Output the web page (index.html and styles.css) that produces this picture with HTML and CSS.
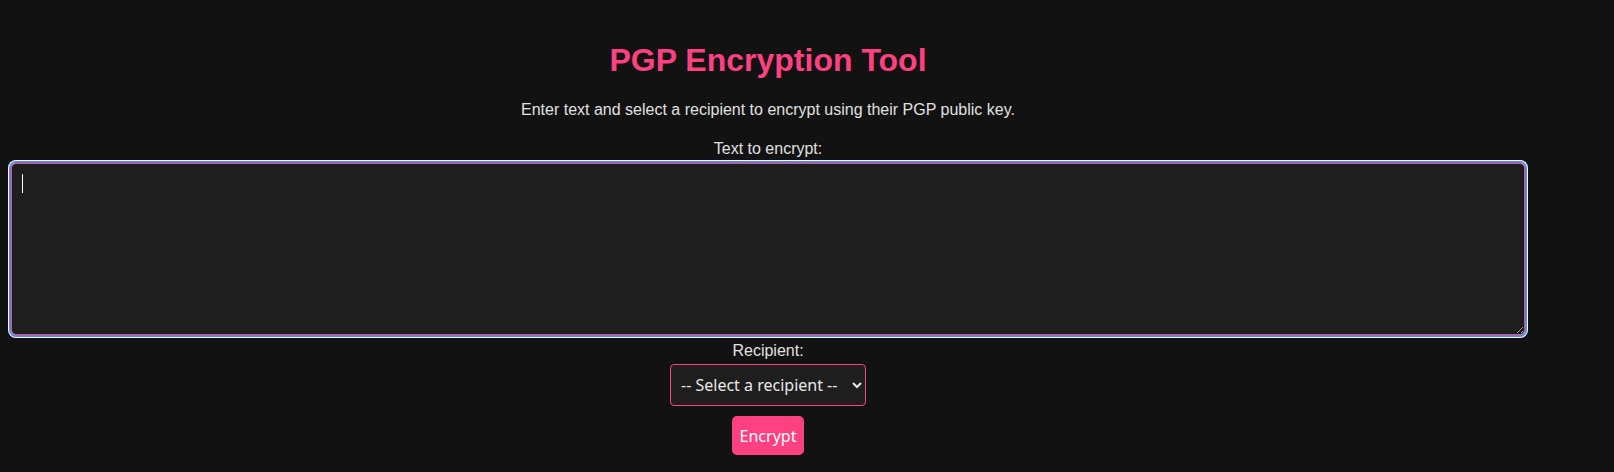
FILE: index.html
```html
<!DOCTYPE html>
<html lang="en">
<head>
<meta charset="utf-8">
<title>PGP Encryption Tool</title>
<link rel="stylesheet" href="styles.css">
</head>
<body>
<main class="page">
  <h1 class="title">PGP Encryption Tool</h1>
  <p class="intro">Enter text and select a recipient to encrypt using their PGP public key.</p>
  <label class="field-label" for="plain">Text to encrypt:</label>
  <div class="plain-wrap">
    <textarea id="plain" class="plain"></textarea>
    <span class="caret"></span>
  </div>
  <label class="field-label field-label--recipient" for="recipient">Recipient:</label>
  <select id="recipient" class="recipient">
    <option>-- Select a recipient --</option>
  </select>
  <button class="encrypt" type="button">Encrypt</button>
</main>
</body>
</html>
```
FILE: styles.css
```css
html, body {
  margin: 0;
  background: #121212;
}
body {
  color: #e0e0e0;
  font-family: "Liberation Sans", Arial, sans-serif;
  font-size: 16px;
}
.page {
  width: 1536px;
  padding-top: 42px;
  display: flex;
  flex-direction: column;
  align-items: center;
  text-align: center;
}
.title {
  margin: 0 0 22px;
  font-size: 32px;
  line-height: 37px;
  font-weight: bold;
  color: #ff4081;
}
.intro {
  margin: 0 0 21px;
  line-height: 18px;
}
.field-label {
  display: block;
  line-height: 18px;
  margin-bottom: 5px;
}
.field-label--recipient {
  margin-top: 7px;
  margin-bottom: 4px;
}
.plain-wrap {
  position: relative;
  display: flex;
}
.plain {
  box-sizing: border-box;
  width: 1514px;
  height: 172px;
  padding: 10px;
  margin: 0;
  background: #1e1e1e;
  color: #e0e0e0;
  border: 1px solid #ff4081;
  border-radius: 5px;
  font-family: "DejaVu Sans", sans-serif;
  font-size: 16px;
  resize: vertical;
  outline: 2px solid #4a8fe6;
  outline-offset: 0;
  box-shadow: 0 0 0 3px #ffffff;
}
.plain:focus {
  outline: 2px solid #4a8fe6;
}
.caret {
  position: absolute;
  left: 11px;
  top: 11px;
  width: 1px;
  height: 19px;
  background: #ffffff;
  pointer-events: none;
}
.recipient {
  box-sizing: border-box;
  width: 196px;
  height: 42px;
  padding: 0 0 0 6px;
  background: #1e1e1e;
  color: #e8e8e8;
  border: 1px solid #ff4081;
  border-radius: 4px;
  font-family: "Noto Sans", sans-serif;
  font-size: 16px;
  text-align: left;
  color-scheme: dark;
}
.encrypt {
  margin-top: 10px;
  box-sizing: border-box;
  height: 39px;
  padding: 0 8px;
  background: #ff4081;
  color: #ffffff;
  border: none;
  border-radius: 5px;
  font-family: "Noto Sans", sans-serif;
  font-size: 16px;
  cursor: pointer;
}
```
